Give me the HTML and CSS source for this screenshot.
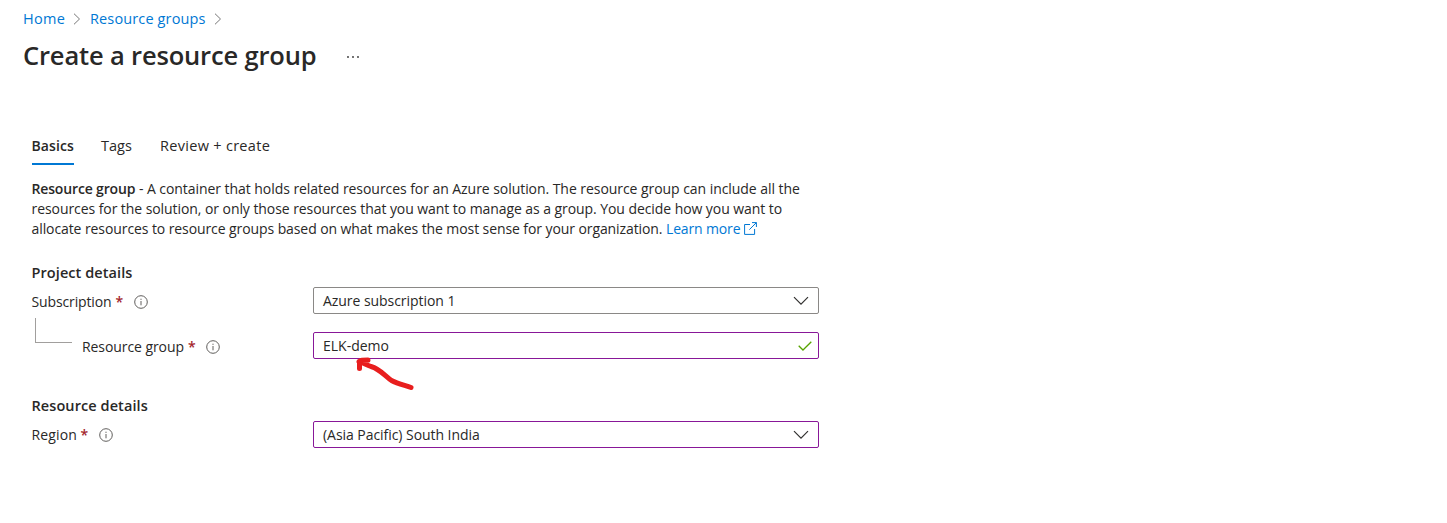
FILE: index.html
```html
<!DOCTYPE html>
<html lang="en">
<head>
<meta charset="utf-8">
<title>Create a resource group</title>
<link rel="stylesheet" href="styles.css">
</head>
<body>
<header class="header">
  <nav class="crumbs">
    <a class="crumb-home">Home</a>
    <svg class="crumb-sep" width="8" height="12" viewBox="0 0 8 12"><path d="M1 .7 6.5 6 1 11.3"/></svg>
    <a class="crumb-groups">Resource groups</a>
    <svg class="crumb-sep" width="8" height="12" viewBox="0 0 8 12"><path d="M1 .7 6.5 6 1 11.3"/></svg>
  </nav>
  <div class="title-row">
    <h1 class="title">Create a resource group</h1>
    <svg class="more" width="14" height="4" viewBox="0 0 14 4"><circle cx="2" cy="2" r=".9"/><circle cx="7" cy="2" r=".9"/><circle cx="12" cy="2" r=".9"/></svg>
  </div>
</header>
<main class="content">
  <div class="tabs">
    <div class="tab tab-active">Basics</div>
    <div class="tab tab-tags">Tags</div>
    <div class="tab tab-review">Review + create</div>
  </div>
  <p class="intro">
    <span class="line line-a"><b>Resource group</b> - A container that holds related resources for an Azure solution. The resource group can include all the</span>
    <span class="line line-b">resources for the solution, or only those resources that you want to manage as a group. You decide how you want to</span>
    <span class="line line-c">allocate resources to resource groups based on what makes the most sense for your organization. <a class="learn">Learn more</a><svg class="external" width="13" height="13" viewBox="0 0 13 13"><path d="M6 2.500H.6v9.900h10V7M8 .6h4.400V5M12.400.6 5.300 7.700"/></svg></span>
  </p>
  <h2 class="section">Project details</h2>
  <div class="row">
    <div class="label"><span class="label-sub">Subscription</span><span class="star">*</span>
      <svg class="info" width="14" height="14" viewBox="0 0 14 14"><circle cx="7" cy="7" r="6.3"/><path d="M7 6v4.3M7 3.7v1.2"/></svg></div>
    <div class="field"><span class="value-sub">Azure subscription 1</span>
      <svg class="chevron" width="16" height="10" viewBox="0 0 16 10"><path d="M1 1.2 8 8.2l7-7"/></svg></div>
  </div>
  <div class="row row-group">
    <div class="label"><span class="branch"></span><span class="label-group">Resource group</span><span class="star">*</span>
      <svg class="info" width="14" height="14" viewBox="0 0 14 14"><circle cx="7" cy="7" r="6.3"/><path d="M7 6v4.3M7 3.7v1.2"/></svg></div>
    <div class="field field-edited"><span class="value-elk">ELK-demo</span>
      <svg class="check" width="14" height="10" viewBox="0 0 14 10"><path d="M.7 4.7 5 9l8.3-8.3"/></svg>
      <svg class="arrow" width="60" height="36" viewBox="0 0 60 36"><path d="M56 31.500C51 29.500 43 28 36.500 24.500C30 20 25 13 16 10.500C11 8.500 7 6.500 4 5.500M4.500 12.500V7Q4.500 4.500 7 4.200L13 4"/></svg></div>
  </div>
  <h2 class="section section-resource">Resource details</h2>
  <div class="row row-region">
    <div class="label"><span class="label-region">Region</span><span class="star">*</span>
      <svg class="info" width="14" height="14" viewBox="0 0 14 14"><circle cx="7" cy="7" r="6.3"/><path d="M7 6v4.3M7 3.7v1.2"/></svg></div>
    <div class="field field-edited"><span class="value-region">(Asia Pacific) South India</span>
      <svg class="chevron" width="16" height="10" viewBox="0 0 16 10"><path d="M1 1.2 8 8.2l7-7"/></svg></div>
  </div>
</main>
</body>
</html>
```
FILE: styles.css
```css
* { box-sizing: border-box; }
body { margin: 0; background: #fff; color: #292827; font: 14px/20px "Open Sans", "Noto Sans", sans-serif; white-space: nowrap; }
svg { fill: none; flex: none; }
a { color: #0078d4; }
b { font-weight: 600; letter-spacing: -.15px; }
.header { padding: 9px 0 0 23px; }
.crumbs { display: flex; align-items: center; height: 20px; font-size: 14.500px; }
.crumb-home { width: 42px; letter-spacing: .3px; }
.crumb-groups { width: 116px; margin-left: 1px; letter-spacing: .13px; }
.crumb-sep { margin: 0 8px; stroke: #777; stroke-width: 1; }
.title-row { display: flex; align-items: center; height: 36px; margin-top: 8px; }
.title { width: 293px; margin: 0; font-size: 25.500px; line-height: 36px; font-weight: 600; letter-spacing: -.16px; }
.more { margin: 4px 0 0 30px; fill: #333; }
.content { padding: 63px 0 0 31.500px; }
.tabs { display: flex; height: 29px; }
.tab { height: 29px; line-height: 20px; }
.tab-active { width: 42.500px; margin-right: 27px; font-weight: 600; letter-spacing: .12px; border-bottom: 2px solid #0078d4; }
.tab-tags { width: 31px; margin-right: 28px; font-size: 14.500px; }
.tab-review { font-size: 14.500px; letter-spacing: .3px; }
.intro { margin: 14px 0 0; }
.line { display: block; height: 20px; }
.line-a { letter-spacing: -.055px; }
.line-b { letter-spacing: -.07px; }
.line-c { letter-spacing: -.09px; }
.learn { letter-spacing: -.15px; }
.external { margin-left: 4px; vertical-align: -1px; stroke: #0078d4; }
.section { margin: 24px 0 0; font-size: 14.500px; line-height: 20px; font-weight: 600; letter-spacing: .08px; }
.section-resource { margin-top: 37px; }
.row { display: flex; align-items: center; height: 27px; margin-top: 4px; }
.row-group { margin-top: 18px; }
.row-region { margin-top: 5px; }
.row-region .label { margin-top: 0; }
.label { display: flex; align-items: center; width: 281.500px; height: 20px; margin-top: 2px; }
.label-sub { width: 80px; letter-spacing: -.13px; }
.label-group { width: 102px; letter-spacing: -.08px; }
.label-region { width: 45px; letter-spacing: .15px; }
.star { width: 7px; margin-left: 4px; color: #a4262c; font-weight: 600; }
.info { margin-left: 11px; stroke: #605e5c; stroke-width: 1; }
.branch { width: 37px; height: 25px; margin: -33px 10px 0 3.500px; border: solid #a19f9d; border-width: 0 0 1px 1px; }
.field { position: relative; display: flex; align-items: center; justify-content: space-between; width: 506px; height: 27px; padding: 0 9px; border: 1px solid #8a8886; border-radius: 2px; }
.field-edited { border-color: #881798; }
.value-sub, .value-region { letter-spacing: -.05px; }
.chevron { stroke: #323130; stroke-width: 1.2; }
.check { margin-right: -3px; stroke: #57a300; stroke-width: 1.3; }
.arrow { position: absolute; left: 41px; top: 23px; stroke: #e81e1e; stroke-width: 5; stroke-linecap: round; stroke-linejoin: round; }
```
